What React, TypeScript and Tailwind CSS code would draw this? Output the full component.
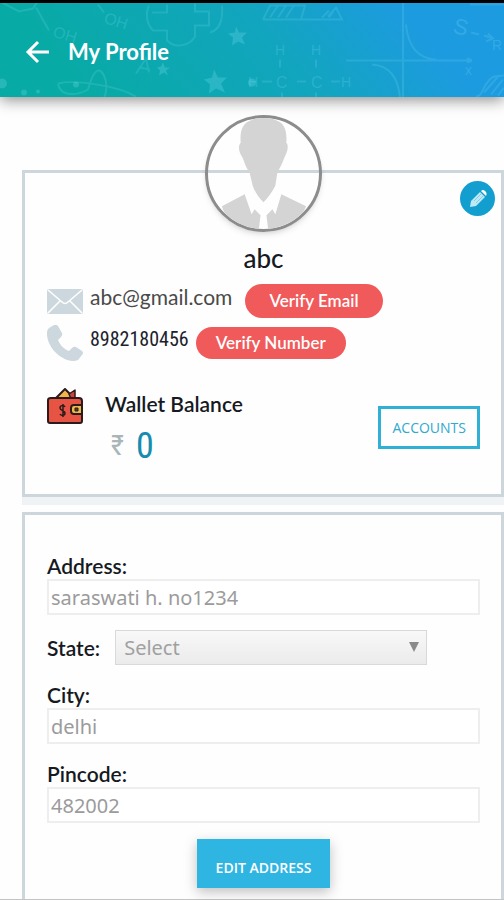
import { useState } from "react"

function HeaderPattern() {
  return (
    <svg
      className="absolute inset-0 h-full w-full"
      viewBox="0 0 504 95"
      preserveAspectRatio="xMidYMid slice"
      fill="none"
      stroke="#7fe3f5"
      strokeOpacity="0.18"
      strokeWidth="2"
      aria-hidden="true"
    >
      <path d="M2 0l17 9 14-3 4-6M36 5l13 23M98 2l6 8" />
      <path d="M149 3c-4 8-2 19 4 25h14v10c8 8 22 6 28-4V23h14V9h-14V1M167 2v8h-15M210 30c11-3 13-14 12-27" />
      <path d="M58 81c2 14 20 12 30 6 4-15 10-26 16-14 4 8 2 18 0 23M58 81c16-4 60 2 78 13" />
      <path d="M136 71l10-15 3 14M139 65l11 2" />
      <path d="M263 17h79l-6-12-8 9M263 17l7-14h35l-4 14M270 15l8-12m0 12l8-12m0 12l8-12M322 15l7-7m0 7l4-6" />
      <path d="M403 0v95M346 58h126l-5-2m5 2l-5 2M406 22c2 22 12 34 30 35M372 62c16 1 26 11 28 33" />
      <path d="M470 2h34M476 94c8 0 6-14 18-20l10-1M484 90l14-16M491 92l12-15M498 93l6-8" />
      <path d="M471 30l8 2m5 1l9 3m-5-5l5 5-7 3" />
      <path d="M280 57v8M316 57v8M262 79h10M297 79h9M331 79h9M282 90v5M316 90v5" />
      <g stroke="none" fill="#7fe3f5" fillOpacity="0.25">
        <path d="M236 24l3 6 8 0-5 5 3 7-7-3-6 4 1-8-5-4 7-1z" />
        <path d="M214 67l4 8 9 0-6 6 4 9-9-4-7 5 1-9-6-5 8-2z" />
        <path d="M163 60l2 5 5 0-4 3 2 5-4-3-5 3 1-5-3-3 4-1z" />
        <circle cx="2" cy="81" r="5" />
        <circle cx="76" cy="82" r="3" />
        <circle cx="24" cy="90" r="3" />
        <circle cx="38" cy="89" r="2" />
        <circle cx="252" cy="80" r="4" />
      </g>
      <g
        stroke="none"
        fill="#7fe3f5"
        fillOpacity="0.22"
        fontFamily="Liberation Sans, sans-serif"
        fontSize="16"
      >
        <text x="52" y="34" transform="rotate(16 52 34)">OH</text>
        <text x="103" y="20" transform="rotate(18 103 20)">OH</text>
        <text x="275" y="52" fontSize="14">H</text>
        <text x="311" y="52" fontSize="14">H</text>
        <text x="248" y="84" fontSize="14">H</text>
        <text x="276" y="85">C</text>
        <text x="311" y="85">C</text>
        <text x="341" y="84" fontSize="14">H</text>
        <text x="465" y="72" fontSize="14">x</text>
        <text x="452" y="30" fontSize="22" transform="rotate(14 452 30)">S</text>
        <text x="492" y="47" fontSize="14">R</text>
      </g>
    </svg>
  )
}

function Avatar() {
  return (
    <div className="relative size-[117px] overflow-hidden rounded-full border-[3px] border-[#8c8c8c] shadow-md">
      <svg viewBox="0 0 112 112" className="h-full w-full" aria-label="Profile photo" role="img">
        <g fill="#d4d4d4">
          <path d="M44 2q12-6 24 0c9 3 12 10 11 23 3 3 1 10-2 15-2 6-5 11-7 15l-2 13c-3 6-7 12-12 17-5-5-9-11-11-17l-3-13c-3-4-5-9-7-15-4-5-5-12-2-15-1-13 2-20 11-23z" />
          <path d="M37 77L14 89c3 12 18 24 37 26l2-17-6-6-3 5z" />
          <path d="M74 77l25 12c-5 13-18 23-38 26l-2-17 6-6 3 5z" />
        </g>
      </svg>
    </div>
  )
}

function EnvelopeIcon() {
  return (
    <svg viewBox="0 0 36 25" className="h-[25px] w-9" aria-hidden="true">
      <rect width="36" height="25" rx="2" fill="#ccd8dd" />
      <path d="M1 1l14 12q3 3 6 0L35 1M1 24l12-12M35 24L23 12" fill="none" stroke="#fff" strokeWidth="1.6" />
    </svg>
  )
}

function PhoneIcon() {
  return (
    <svg viewBox="0 0 36 36" className="size-9" aria-hidden="true">
      <path
        d="M2 3L7 0q2-1 4 1l4 7q1 2-1 4l-3 3c2 5 6 9 11 11l3-3q2-2 4-1l6 4q2 2 0 4l-4 5q-2 1-5 1C12 35-1 20 0 7q0-2 2-4z"
        fill="#ccd8dd"
      />
    </svg>
  )
}

function WalletIcon() {
  return (
    <svg viewBox="0 0 36 36" className="size-9" stroke="#2b1b1c" strokeWidth="2" strokeLinejoin="round" aria-hidden="true">
      <path d="M8 11L18 1l10 10z" fill="#f3b54a" />
      <path d="M22 6l6-4v9h-4z" fill="#c9453f" strokeWidth="1.5" />
      <path d="M1 12q0-2 3-2h28q3 0 3 3v20q0 2-2 2H3q-2 0-2-2z" fill="#e85443" />
      <path d="M35 17h-8q-3 0-3 3v3q0 3 3 3h8z" fill="#e9b94e" />
      <rect x="28" y="20" width="3" height="3" fill="#5a3a1e" strokeWidth="1" />
      <path d="M18 19c-1-2-5-2-5 1s5 2 5 5-4 3-5 1M16 16v13" fill="none" strokeWidth="1.5" />
    </svg>
  )
}

function PencilIcon() {
  return (
    <svg viewBox="0 0 18 18" className="size-[18px]" aria-hidden="true">
      <path d="M1 17l1-6L11 2l5 5-9 9z" fill="#bfe9f7" />
      <path d="M12 1q2-2 4 0l1 1q1 2 0 4z" fill="#fff" />
      <path d="M5 11l7-7M7 13l7-7" stroke="#7fcde8" strokeWidth="1" fill="none" />
    </svg>
  )
}

const labelClass = "font-[Lato,sans-serif] text-[21px] leading-6 font-semibold text-[#16191f]"
const pillClass = "rounded-full bg-[#f05a5b] text-[17px] font-semibold text-white"

type FieldProps = {
  id: string
  label: string
  value: string
  onChange: (value: string) => void
}

function Field({ id, label, value, onChange }: FieldProps) {
  return (
    <div className="flex flex-col gap-px">
      <label htmlFor={id} className={labelClass}>
        {label}
      </label>
      <input
        id={id}
        type="text"
        value={value}
        onChange={(e) => onChange(e.target.value)}
        className="h-9 w-full border-2 border-[#eeeeee] bg-white px-0.5 font-['Noto_Sans',sans-serif] text-xl text-[#9b9b9b] outline-none"
      />
    </div>
  )
}

export default function App() {
  const [address, setAddress] = useState("saraswati h. no1234")
  const [city, setCity] = useState("delhi")
  const [pincode, setPincode] = useState("482002")

  return (
    <div className="flex min-h-screen flex-col border-t-[3px] border-b border-t-black border-b-[#c4c4c4] bg-[#fefefe] font-[Lato,sans-serif]">
      <header className="relative flex h-[94px] items-center bg-[linear-gradient(50deg,#08aaa5_15%,#12a5bf_55%,#1d9be0_82%)] pt-[3px] pl-[25px] shadow-[0_3px_14px_rgba(0,0,0,0.45)]">
        <HeaderPattern />
        <div className="relative flex items-center gap-[19px]">
          <button type="button" aria-label="Back" className="text-white">
            <svg viewBox="0 0 24 24" className="size-6" fill="none" stroke="currentColor" strokeWidth="3" aria-hidden="true">
              <path d="M13 2L3 12l10 10M3 12h21" />
            </svg>
          </button>
          <h1 className="text-[22px] leading-7 font-bold text-white">My Profile</h1>
        </div>
      </header>

      <main className="flex flex-1 flex-col pt-[73px] pl-[22px]">
        <section className="relative flex h-[327px] flex-col border-[3px] border-[#cdd6db] pr-[21px] pl-[22px] shadow-[0_8px_0_#f0f3f6]">
          <div className="-mt-[58px] flex justify-center">
            <Avatar />
          </div>
          <button
            type="button"
            aria-label="Edit profile"
            className="absolute top-2 right-1.5 flex size-[35px] items-center justify-center rounded-full bg-[#129fd0]"
          >
            <PencilIcon />
          </button>
          <h2 className="mt-[10px] text-center text-[26px] leading-8 font-medium text-[#16191f]">abc</h2>

          <div className="mt-[10px] flex h-[34px] items-center gap-[7px]">
            <EnvelopeIcon />
            <span className="self-start text-[21px] leading-[26px] text-[#4a4a4a]">abc@gmail.com</span>
            <button type="button" className={`${pillClass} ml-1.5 h-[34px] px-6`}>
              Verify Email
            </button>
          </div>
          <div className="mt-2 flex h-[34px] items-center gap-[7px]">
            <PhoneIcon />
            <span className="self-start font-['Roboto_Condensed','Liberation_Sans_Narrow',sans-serif] text-xl leading-[26px] text-[#1c222b]">
              8982180456
            </span>
            <button type="button" className={`${pillClass} h-8 px-5`}>
              Verify Number
            </button>
          </div>

          <div className="mt-7 flex items-start">
            <WalletIcon />
            <div className="ml-[22px] flex-1">
              <p className="text-[21px] leading-8 font-semibold text-[#16191f]">Wallet Balance</p>
              <p className="flex items-center gap-3 pl-1.5 font-['Roboto_Condensed','Liberation_Sans_Narrow',sans-serif] leading-[52px]">
                <span className="text-[28px] text-[#a9b5b9]">₹</span>
                <span className="text-4xl text-[#168cae]">0</span>
              </p>
            </div>
            <button
              type="button"
              className="mt-[18px] h-[43px] border-[3px] border-[#31b0d5] px-[11px] font-['Open_Sans',sans-serif] text-sm font-medium text-[#31a9cf]"
            >
              ACCOUNTS
            </button>
          </div>
        </section>

        <section className="mt-[15px] flex flex-1 flex-col border-[3px] border-b-0 border-[#cdd6db] pt-[39px] pr-[21px] pb-2 pl-[22px]">
          <form className="flex flex-col" onSubmit={(e) => e.preventDefault()}>
            <Field id="address" label="Address:" value={address} onChange={setAddress} />
            <div className="mt-[15px] mb-[18px] flex items-center gap-[15px]">
              <label htmlFor="state" className={labelClass}>
                State:
              </label>
              <div className="relative mr-[53px] flex-1">
                <select
                  id="state"
                  className="h-[35px] w-full appearance-none border border-[#d9d9d9] bg-linear-to-b from-[#f8f8f8] to-[#ebebeb] px-2 font-['Noto_Sans',sans-serif] text-xl text-[#a0a0a0] outline-none"
                >
                  <option>Select</option>
                </select>
                <svg viewBox="0 0 10 10" className="pointer-events-none absolute top-3 right-2 size-[10px]" fill="#8a8a8a" aria-hidden="true">
                  <path d="M0 0h10L5 10z" />
                </svg>
              </div>
            </div>
            <div className="flex flex-col gap-[18px]">
              <Field id="city" label="City:" value={city} onChange={setCity} />
              <Field id="pincode" label="Pincode:" value={pincode} onChange={setPincode} />
            </div>
            <button
              type="submit"
              className="mt-4 h-[49px] self-center bg-[#2fb5e2] px-[19px] pt-2 font-['Open_Sans',sans-serif] text-sm font-semibold text-white shadow-[0_4px_12px_rgba(0,0,0,0.25)]"
            >
              EDIT ADDRESS
            </button>
          </form>
        </section>
      </main>
    </div>
  )
}
